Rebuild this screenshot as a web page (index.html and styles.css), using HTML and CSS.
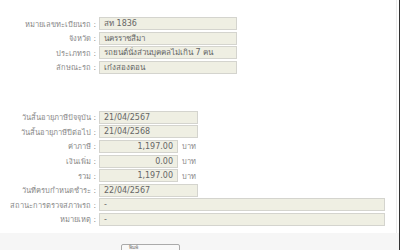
FILE: index.html
```html
<!DOCTYPE html>
<html lang="th">
<head>
    <meta charset="UTF-8">
    <title>ข้อมูลภาษีรถ</title>
    <link rel="stylesheet" href="styles.css">
</head>
<body>

<div class="page">
    <div class="content">
        <div class="section top">
            <div class="row">
                <label>หมายเลขทะเบียนรถ :</label>
                <div class="field mid">สท 1836</div>
            </div>
            <div class="row">
                <label>จังหวัด :</label>
                <div class="field mid">นครราชสีมา</div>
            </div>
            <div class="row">
                <label>ประเภทรถ :</label>
                <div class="field mid">รถยนต์นั่งส่วนบุคคลไม่เกิน 7 คน</div>
            </div>
            <div class="row">
                <label>ลักษณะรถ :</label>
                <div class="field mid">เก๋งสองตอน</div>
            </div>
        </div>

        <div class="section bottom">
            <div class="row">
                <label>วันสิ้นอายุภาษีปัจจุบัน :</label>
                <div class="field date">21/04/2567</div>
            </div>
            <div class="row">
                <label>วันสิ้นอายุภาษีปีต่อไป :</label>
                <div class="field date">21/04/2568</div>
            </div>
            <div class="row">
                <label>ค่าภาษี :</label>
                <div class="field money">1,197.00</div>
                <span class="unit">บาท</span>
            </div>
            <div class="row">
                <label>เงินเพิ่ม :</label>
                <div class="field money">0.00</div>
                <span class="unit">บาท</span>
            </div>
            <div class="row">
                <label>รวม :</label>
                <div class="field money">1,197.00</div>
                <span class="unit">บาท</span>
            </div>
            <div class="row">
                <label>วันที่ครบกำหนดชำระ :</label>
                <div class="field date">22/04/2567</div>
            </div>
            <div class="row">
                <label>สถานะการตรวจสภาพรถ :</label>
                <div class="field wide">-</div>
            </div>
            <div class="row">
                <label>หมายเหตุ :</label>
                <div class="field wide">-</div>
            </div>
        </div>
    </div>

    <div class="footer">
        <button class="btn">พิมพ์</button>
    </div>
</div>

</body>
</html>
```

FILE: styles.css
```css
body {
    margin: 0;
    font-family: Tahoma, "DejaVu Sans", "Noto Sans", sans-serif;
    font-size: 8px;
    color: #555;
    background: #fff;
}
.page {
    height: 250px;
    border-right: 1px solid #333;
    overflow: hidden;
}
.content {
    margin-right: 2px;
    border-right: 1px solid #ececec;
    padding-top: 17px;
    padding-bottom: 7px;
}
.section {
    display: flex;
    flex-direction: column;
    gap: 1.6px;
}
.section.bottom {
    margin-top: 37px;
}
.row {
    display: flex;
    align-items: center;
    height: 13px;
}
label {
    width: 96px;
    text-align: right;
    color: #888;
    padding-right: 3px;
    white-space: nowrap;
    font-size: 7.5px;
}
.field {
    box-sizing: border-box;
    height: 13px;
    line-height: 11px;
    padding: 0 4px;
    background: #efefe3;
    border: 1px solid #d4d4ce;
    color: #666;
    white-space: nowrap;
    overflow: hidden;
}
.field.mid {
    width: 138px;
}
.field.date {
    width: 99px;
}
.field.money {
    width: 79px;
    text-align: right;
}
.field.wide {
    width: 286px;
}
.unit {
    margin-left: 4px;
    color: #888;
    font-size: 7.5px;
}
.footer {
    background: #f6f6f6;
    height: 60px;
    padding-left: 121px;
    padding-top: 11px;
    box-sizing: border-box;
}
.btn {
    display: block;
    width: 59px;
    font-family: inherit;
    font-size: 5px;
    line-height: 5px;
    text-align: left;
    color: #777;
    background: #f9f9f9;
    border: 1px solid #aaa;
    border-radius: 2px;
    padding: 0 0 12px 7px;
}
```
